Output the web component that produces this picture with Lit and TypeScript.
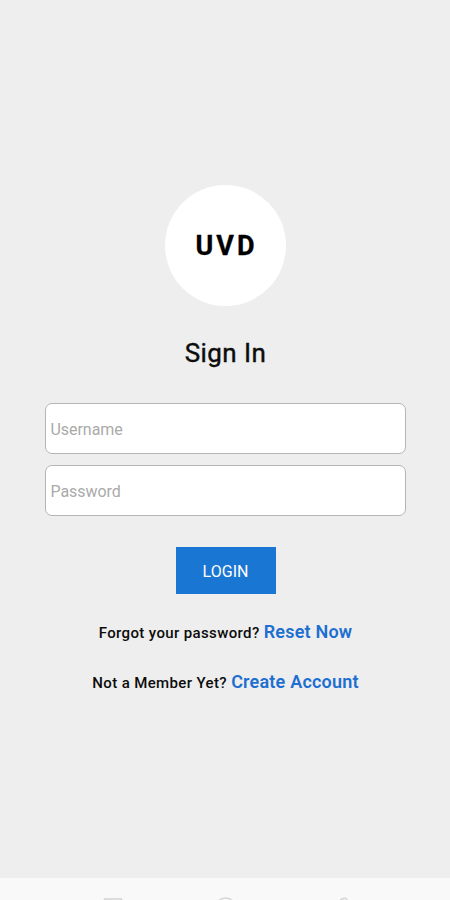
import { LitElement, html, css } from "lit";
import { customElement } from "lit/decorators.js";

@customElement("app-root")
export class AppRoot extends LitElement {
  static styles = css`
    :host {
      display: flex;
      flex-direction: column;
      height: 900px;
      overflow: hidden;
      background: #eeeeee;
      color: #0c0c0c;
      font-family: Roboto, "Liberation Sans", sans-serif;
    }
    main {
      flex: 1;
      display: flex;
      flex-direction: column;
      align-items: center;
      padding: 185px 44px 0 45px;
    }
    .logo {
      width: 121px;
      height: 121px;
      border-radius: 50%;
      background: #fff;
      display: flex;
      align-items: center;
      justify-content: center;
      font-size: 27px;
      font-weight: 700;
      letter-spacing: 3px;
      text-indent: 2px;
      color: #000;
      -webkit-text-stroke: 0.3px;
    }
    h1 {
      margin: 31px 0 0;
      font-size: 26px;
      line-height: 32px;
      font-weight: 400;
      letter-spacing: 0.45px;
      -webkit-text-stroke: 0.4px;
    }
    .fields {
      align-self: stretch;
      display: grid;
      gap: 11px;
      margin-top: 34px;
    }
    input {
      box-sizing: border-box;
      width: 100%;
      height: 51px;
      padding: 1px 4.5px 0;
      border: 1.5px solid #b5b5b5;
      border-radius: 7px;
      background: #fff;
      font: 400 16px Roboto, "Liberation Sans", sans-serif;
      letter-spacing: -0.05px;
      outline: none;
    }
    input::placeholder {
      color: #aaaaaa;
    }
    button {
      width: 100px;
      height: 47px;
      margin: 31px 0 0;
      padding: 2px 0 0;
      border: 0;
      background: #1976d2;
      color: #fff;
      font: 400 16px Roboto, "Liberation Sans", sans-serif;
    }
    p {
      margin: 27px 0 0;
      height: 22px;
      line-height: 22px;
      font-size: 15px;
      font-weight: 500;
      letter-spacing: 0.37px;
      white-space: nowrap;
    }
    a {
      color: #1d6fd0;
      font-size: 18px;
      font-weight: 600;
      letter-spacing: 0.2px;
    }
    .prompt {
      margin-top: 28px;
    }
    nav {
      height: 22px;
      background: #f9f9f9;
      overflow: hidden;
    }
    nav svg {
      display: block;
    }
  `;

  render() {
    return html`
      <main>
        <div class="logo">UVD</div>
        <h1>Sign In</h1>
        <div class="fields">
          <input placeholder="Username" aria-label="Username" />
          <input type="password" placeholder="Password" aria-label="Password" />
        </div>
        <button>LOGIN</button>
        <p class="forgot"><span>Forgot your password?</span> <a>Reset Now</a></p>
        <p class="prompt"><span>Not a Member Yet?</span> <a>Create Account</a></p>
      </main>
      <nav>
        <svg width="450" height="22" fill="none" stroke="#d4d4d4" stroke-width="1.5">
          <rect x="104.5" y="21" width="17" height="17" />
          <circle cx="225.5" cy="30" r="10" />
          <path d="M347 38V22Q346 19 342 21L330 30" />
        </svg>
      </nav>
    `;
  }
}
